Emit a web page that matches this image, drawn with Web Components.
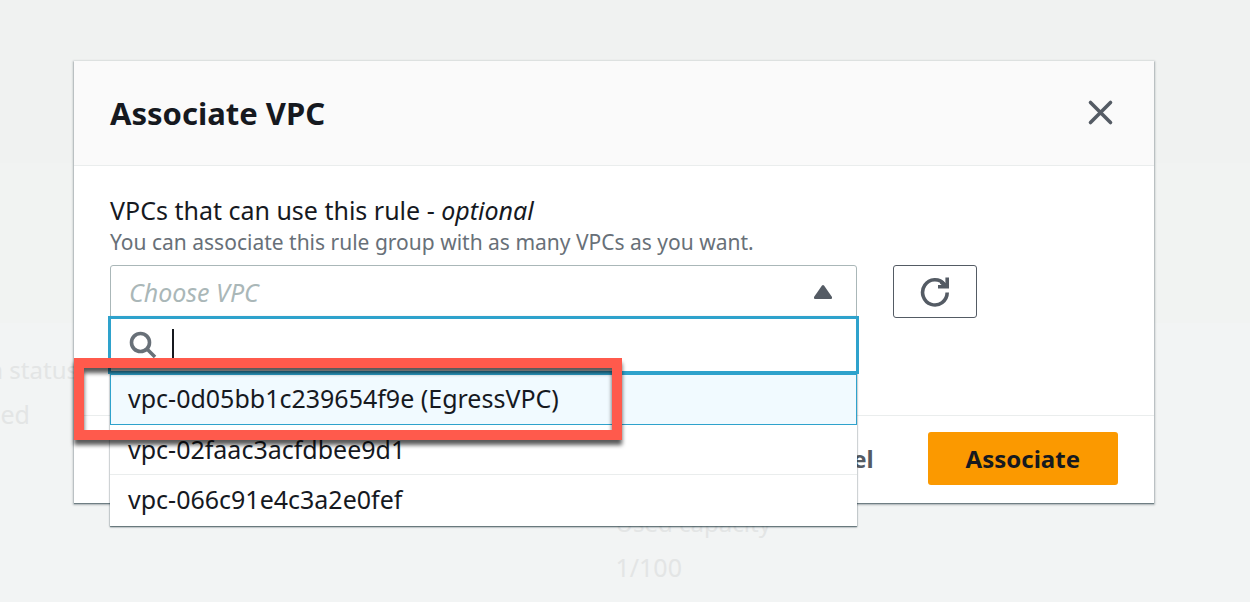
<!DOCTYPE html>
<html lang="en">
<head>
<meta charset="utf-8">
<title>Associate VPC</title>
<style>
  html, body { margin: 0; min-height: 100%; }
  body {
    font-family: "Noto Sans", "Open Sans", sans-serif;
    font-size: 25px;
    line-height: 32px;
    color: #16191f;
    background: #f2f4f4;
    overflow: hidden;
  }
</style>
</head>
<body>
<app-shell>
  <page-behind slot="behind"></page-behind>
  <modal-dialog heading="Associate VPC">
    <form-field>
      <span slot="label">VPCs that can use this rule - <em>optional</em></span>
      <span slot="hint">You can associate this rule group with as many VPCs as you want.</span>
      <vpc-select></vpc-select>
      <refresh-button slot="action"></refresh-button>
    </form-field>
    <action-button slot="footer" variant="link">Cancel</action-button>
    <action-button slot="footer" variant="primary">Associate</action-button>
  </modal-dialog>
</app-shell>

<script>
const define = (name, html, setup) => {
  const template = document.createElement('template');
  template.innerHTML = '<style>*{box-sizing:border-box}</style>' + html;
  customElements.define(name, class extends HTMLElement {
    constructor() {
      super();
      this.attachShadow({ mode: 'open' }).append(template.content.cloneNode(true));
    }
    connectedCallback() { if (setup) setup(this, this.shadowRoot); }
  });
};

define('app-shell', `
  <style>
    :host { display: grid; min-height: 100vh; }
    .behind, .front { grid-area: 1 / 1; min-width: 0; }
    .behind { display: grid; }
    .front { position: relative; padding: 61px 96px 76px 74px; }
  </style>
  <div class="behind"><slot name="behind"></slot></div>
  <div class="front"><slot></slot></div>`);

define('page-behind', `
  <style>
    :host { display: grid; grid-template-rows: 163px 160px 1fr; color: #e3e5e5; overflow: hidden; }
    .top { background: #f0f2f1; }
    .mid { background: #f1f3f2; }
    .details { display: grid; grid-template-columns: 97fr 100fr; background: #f2f4f4; }
    dl { margin: 0; }
    dl:first-child { padding-top: 31px; }
    dl:last-child { padding-top: 184px; }
    dt, dd { margin: 0 0 12px; white-space: nowrap; }
    dt { font-size: 24px; }
    dl:first-child dt, dl:first-child dd { display: flex; justify-content: flex-end; }
    dl:first-child dt { width: 78px; }
    dl:first-child dd { width: 30px; }
  </style>
  <div class="top"></div>
  <div class="mid"></div>
  <div class="details">
    <dl><dt>n status</dt><dd>ced</dd></dl>
    <dl><dt>Used capacity</dt><dd>1/100</dd></dl>
  </div>`);

define('modal-dialog', `
  <style>
    :host { display: block; background: #fff; box-shadow: 0 1px 2px 1px rgba(0,28,36,.25), 0 1px 1px rgba(0,28,36,.4); }
    header {
      display: flex; align-items: center; justify-content: space-between;
      padding: 32px 36px; background: #fafafa; border-bottom: 1px solid #eaeded;
    }
    h2 { margin: 0; font-size: 31px; line-height: 40px; font-weight: 700; }
    .close { display: grid; padding: 4px; border: 0; background: none; color: #545b64; }
    .body { padding: 27px 36px 97px; }
    footer {
      display: flex; justify-content: flex-end; gap: 16px;
      padding: 16px 36px 18px; border-top: 1px solid #eaeded;
    }
  </style>
  <section role="dialog" aria-modal="true" aria-labelledby="title">
    <header>
      <h2 id="title"></h2>
      <button class="close" type="button" aria-label="Close">
        <svg width="28" height="28" viewBox="0 0 28 28" fill="none" stroke="currentColor" stroke-width="3.600" stroke-linecap="round"><path d="M4.500 3.500 24.500 23.500M24.500 3.500 4.500 23.500"/></svg>
      </button>
    </header>
    <div class="body"><slot></slot></div>
    <footer><slot name="footer"></slot></footer>
  </section>`, (host, root) => { root.querySelector('h2').textContent = host.getAttribute('heading'); });

define('form-field', `
  <style>
    :host { display: block; }
    .hint { font-size: 21px; line-height: 28px; color: #687078; }
    .label { line-height: 35px; }
    .row { display: grid; grid-template-columns: repeat(4, 1fr); gap: 36px; margin-top: 9px; }
    .control { grid-column: span 3; }
  </style>
  <div class="label"><slot name="label"></slot></div>
  <div class="hint"><slot name="hint"></slot></div>
  <div class="row">
    <div class="control"><slot></slot></div>
    <div><slot name="action"></slot></div>
  </div>`);

define('refresh-button', `
  <style>
    :host { display: block; }
    button {
      display: grid; place-items: center; width: 84px; height: 53px; padding: 0;
      background: #fff; border: 1px solid #545b64; border-radius: 3px; color: #545b64;
    }
  </style>
  <button type="button" aria-label="Refresh">
    <svg width="32" height="32" viewBox="0 0 32 32" fill="none" stroke="currentColor" stroke-width="3.600">
      <path d="M28.200 16.500A12.300 12.600 0 1 1 25.500 8.500"/><path d="M28.200 1.500V10.700H19M28 11 22 6"/>
    </svg>
  </button>`);

define('action-button', `
  <style>
    :host { display: block; }
    button {
      height: 53px; padding: 0 38px; border: 0; border-radius: 3px; background: none;
      font: inherit; font-size: 24px; font-weight: 700; color: #545b64;
    }
    :host([variant="primary"]) button { background: #fb9900; color: #16191f; }
  </style>
  <button type="button"><slot></slot></button>`);

define('vpc-select', `
  <style>
    :host { display: block; position: relative; }
    .trigger { display: grid; align-items: center; }
    .trigger > * { grid-area: 1 / 1; }
    select {
      appearance: none; width: 100%; height: 53px; padding: 0 18px; border: 1px solid #aab7b8;
      border-radius: 3px 3px 0 0; background: #fff; font: inherit; font-style: italic; color: #aab7b8; opacity: 1;
    }
    .arrow { justify-self: end; margin-right: 24px; fill: #545b64; pointer-events: none; }
    .menu {
      position: absolute; top: 51px; left: 0; right: 0; background: #fff;
      box-shadow: 0 1px 2px 0 rgba(0,28,36,.4), 0 1px 1px rgba(0,28,36,.4);
    }
    .search {
      display: flex; align-items: center; height: 58px; margin: 0 -2px; padding: 0 18px;
      border: 3px solid #2ea2cc; background: #fff;
    }
    .caret { width: 2px; height: 32px; margin-left: 15px; background: #16191f; }
    input { flex: 1; min-width: 0; border: 0; padding: 0; outline: 0; background: none; font: inherit; caret-color: transparent; }
    ul { margin: 0; padding: 0; list-style: none; }
    li { position: relative; height: 50px; padding: 0 18px; line-height: 49px; border-bottom: 1px solid #eaeded; }
    li:first-child, li:last-child { height: 51px; border: 0; }
    li[aria-selected="true"] { background: #f1faff; box-shadow: inset 0 0 0 1px #2ea2cc; }
    highlight-frame { position: absolute; inset: -16px 235px -15px -36px; z-index: 1; }
  </style>
  <div class="trigger">
    <select aria-label="VPC"><option>Choose VPC</option></select>
    <svg class="arrow" width="20" height="16" viewBox="0 0 20 16"><path d="M9 1.500Q10 .5 11 1.500L19 13Q19.500 15 18 15H2Q.5 15 1 13Z"/></svg>
  </div>
  <div class="menu">
    <label class="search">
      <svg width="28" height="28" viewBox="0 0 28 28" fill="none" stroke="#687078" stroke-width="3.600"><circle cx="11.500" cy="11.500" r="9"/><path d="M17.500 17.500 26 26"/></svg>
      <span class="caret"></span>
      <input type="text" aria-label="Search VPCs">
    </label>
    <ul role="listbox">
      <li role="option" aria-selected="true">vpc-0d05bb1c239654f9e (EgressVPC)<highlight-frame></highlight-frame></li>
      <li role="option">vpc-02faac3acfdbee9d1</li>
      <li role="option">vpc-066c91e4c3a2e0fef</li>
    </ul>
  </div>`);

define('highlight-frame', `
  <style>
    :host { display: block; box-sizing: border-box; border: 10px solid #ff5a4c; filter: drop-shadow(0 5px 2px rgba(0,0,0,.65)); pointer-events: none; }
  </style>`);
</script>
</body>
</html>
